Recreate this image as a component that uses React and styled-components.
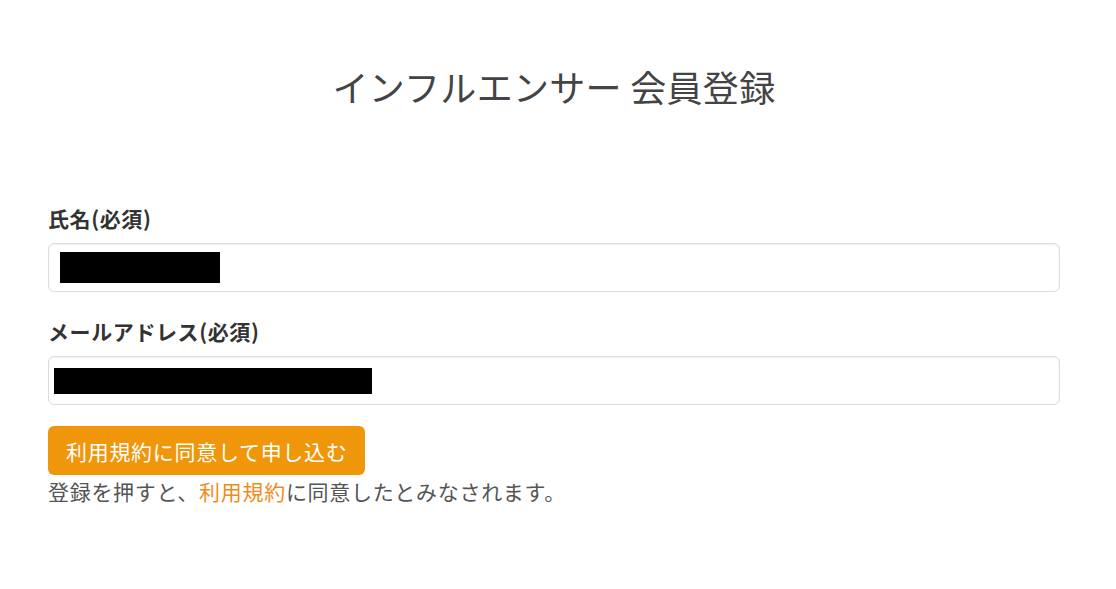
import React from 'react';
import styled, { createGlobalStyle } from 'styled-components';

const GlobalStyle = createGlobalStyle`
  html, body {
    margin: 0;
    padding: 0;
    background: #fff;
  }
  body {
    font-family: "Noto Sans CJK JP", "Noto Sans", sans-serif;
    font-size: 21px;
    line-height: 30px;
    letter-spacing: 0.7px;
    color: #333;
  }
`;

const Page = styled.div`
  padding: 66px 56px 0 48px;
`;

const Title = styled.h1`
  margin: 0 0 97px;
  font-size: 36px;
  line-height: 40px;
  font-weight: 400;
  letter-spacing: 0.3px;
  text-align: center;
  color: #444;
`;

const Field = styled.div`
  margin-bottom: ${(p) => p.$gap || 24}px;
`;

const Label = styled.label`
  display: block;
  margin-bottom: 10px;
  font-weight: 700;
  letter-spacing: 0.6px;
  color: #333;
`;

const Input = styled.div`
  display: flex;
  align-items: center;
  height: 49px;
  box-sizing: border-box;
  padding: 0 ${(p) => p.$pad}px;
  border: 1px solid #dcdcdc;
  border-radius: 6px;
  background: #fff;
  box-shadow: inset 0 1px 2px rgba(0, 0, 0, 0.06);
`;

const Redacted = styled.span`
  display: block;
  width: ${(p) => p.$w}px;
  height: ${(p) => p.$h}px;
  background: #000;
`;

const Button = styled.button`
  display: block;
  height: 49px;
  padding: 0 18px;
  border: none;
  border-radius: 6px;
  background: #f0960a;
  color: #fff;
  font-family: inherit;
  font-size: 21px;
  line-height: 30px;
  letter-spacing: 0.7px;
  cursor: pointer;
`;

const Note = styled.p`
  margin: 1px 0 0;
  color: #555;
`;

const Link = styled.a`
  color: #ee8c1a;
  text-decoration: none;
`;

export default function App() {
  return (
    <>
      <GlobalStyle />
      <Page>
        <Title>インフルエンサー 会員登録</Title>
        <Field>
          <Label>氏名(必須)</Label>
          <Input $pad={11}>
            <Redacted $w={160} $h={31} />
          </Input>
        </Field>
        <Field $gap={21}>
          <Label>メールアドレス(必須)</Label>
          <Input $pad={5}>
            <Redacted $w={318} $h={26} />
          </Input>
        </Field>
        <Button>利用規約に同意して申し込む</Button>
        <Note>
          登録を押すと、<Link href="#">利用規約</Link>に同意したとみなされます。
        </Note>
      </Page>
    </>
  );
}
